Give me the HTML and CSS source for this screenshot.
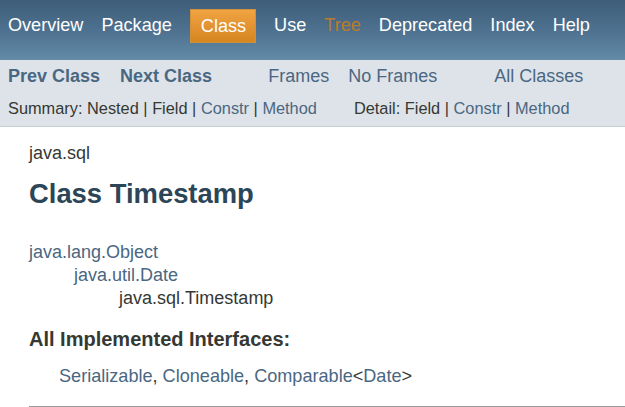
FILE: index.html
```html
<!DOCTYPE html>
<html lang="en">
<head>
<meta charset="utf-8">
<title>Timestamp</title>
<link rel="stylesheet" href="styles.css">
</head>
<body>
<div class="topNav">
  <ul class="navList">
    <li><a href="#">Overview</a></li>
    <li><a href="#">Package</a></li>
    <li class="navBarCell1Rev">Class</li>
    <li><a href="#">Use</a></li>
    <li><a href="#" class="tree">Tree</a></li>
    <li><a href="#">Deprecated</a></li>
    <li><a href="#">Index</a></li>
    <li><a href="#">Help</a></li>
  </ul>
</div>
<div class="subNav">
  <div class="subRow">
    <ul class="subList prevNext">
      <li><a href="#" class="typeNameLink">Prev Class</a></li>
      <li><a href="#" class="typeNameLink">Next Class</a></li>
    </ul>
    <ul class="subList frames">
      <li><a href="#">Frames</a></li>
      <li><a href="#">No Frames</a></li>
    </ul>
    <ul class="subList allClasses">
      <li><a href="#">All Classes</a></li>
    </ul>
  </div>
  <div class="subRow small">
    <ul class="subList summary">
      <li>Summary:&nbsp;</li>
      <li>Nested&nbsp;|&nbsp;</li>
      <li>Field&nbsp;|&nbsp;</li>
      <li><a href="#">Constr</a>&nbsp;|&nbsp;</li>
      <li><a href="#">Method</a></li>
    </ul>
    <ul class="subList detail">
      <li>Detail:&nbsp;</li>
      <li>Field&nbsp;|&nbsp;</li>
      <li><a href="#">Constr</a>&nbsp;|&nbsp;</li>
      <li><a href="#">Method</a></li>
    </ul>
  </div>
</div>
<div class="header">
  <div class="subTitle">java.sql</div>
  <h2 class="title">Class Timestamp</h2>
</div>
<div class="contentContainer">
  <ul class="inheritance">
    <li><a href="#">java.lang.Object</a>
      <ul class="inheritance">
        <li><a href="#">java.util.Date</a>
          <ul class="inheritance">
            <li>java.sql.Timestamp</li>
          </ul>
        </li>
      </ul>
    </li>
  </ul>
  <dl class="interfaces">
    <dt>All Implemented Interfaces:</dt>
    <dd><a href="#">Serializable</a>, <a href="#">Cloneable</a>, <a href="#">Comparable</a>&lt;<a href="#">Date</a>&gt;</dd>
  </dl>
  <hr class="rule">
</div>
</body>
</html>
```
FILE: styles.css
```css
html, body {
  margin: 0;
  padding: 0;
  background: #ffffff;
}
body {
  font-family: "Liberation Sans", Arial, sans-serif;
  color: #353833;
  font-size: 18px;
}
a {
  color: #4a6782;
  text-decoration: none;
}
ul {
  list-style: none;
  margin: 0;
  padding: 0;
}

/* top navigation */
.topNav {
  height: 60px;
  box-sizing: border-box;
  padding: 9px 0 0 8px;
  background: linear-gradient(to bottom, #3e5d79 0%, #4f7391 55%, #638ba8 100%);
}
.topNav .navList {
  display: flex;
  gap: 18px;
}
.topNav li {
  height: 33px;
  line-height: 33px;
  font-size: 18.1px;
  color: #ffffff;
}
.topNav a {
  color: #ffffff;
}
.topNav a.tree {
  color: #bb7a2a;
}
.topNav .navBarCell1Rev {
  padding: 0 9px 0 10px;
  height: 32px;
  line-height: 32px;
  border: 1px solid #d0913a;
  background: linear-gradient(to bottom, #f1a443 0%, #e39332 50%, #d6861f 100%);
  color: #ffffff;
}

/* sub navigation */
.subNav {
  background: #dee3e9;
  padding: 6px 0 7px 8px;
  border-bottom: 1px solid #c8ced6;
}
.subRow {
  display: flex;
  height: 20px;
  line-height: 20px;
}
.subRow.small {
  margin-top: 11px;
  height: 22px;
  line-height: 22px;
  font-size: 16.35px;
}
.subList {
  display: flex;
}
.prevNext {
  gap: 20px;
}
.typeNameLink {
  font-weight: bold;
}
.frames {
  margin-left: 56px;
  gap: 19px;
}
.allClasses {
  margin-left: 57px;
}
.detail {
  margin-left: 37px;
}

/* header */
.header {
  padding-left: 29px;
}
.subTitle {
  margin-top: 15px;
  line-height: 23px;
  font-size: 18px;
}
.title {
  margin: 13px 0 0;
  font-size: 27.4px;
  line-height: 32px;
  font-weight: bold;
  color: #2c4557;
}

/* content */
.contentContainer {
  padding-left: 29px;
}
.inheritance {
  font-size: 18px;
  line-height: 23px;
}
.contentContainer > .inheritance {
  margin-top: 31px;
}
.inheritance .inheritance {
  padding-left: 45px;
}
.interfaces {
  margin: 17px 0 0;
}
.interfaces dt {
  font-size: 20px;
  line-height: 24px;
  font-weight: bold;
}
.interfaces dd {
  margin: 14px 0 0 30px;
  font-size: 18.1px;
  line-height: 23px;
}
.rule {
  margin: 18px 0 0;
  border: 0;
  border-top: 1px solid #9a9a9a;
  height: 0;
}
```
